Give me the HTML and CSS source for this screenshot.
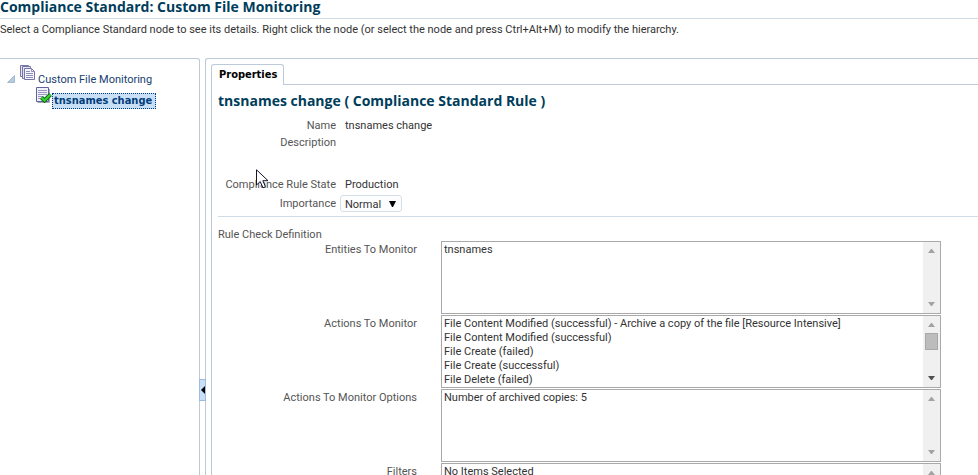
FILE: index.html
```html
<!DOCTYPE html>
<html lang="en">
    <head>
        <title>Compliance Standard</title>
        <meta charset="utf-8" />
        <meta name="viewport" content="width=device-width, initial-scale=1.0" />
        <link rel="stylesheet" href="styles.css">
    </head>
    <body>
        <h1 class="page-title">Compliance Standard: Custom File Monitoring</h1>
        <p class="hint">Select a Compliance Standard node to see its details. Right click the node (or select the node and press Ctrl+Alt+M) to modify the hierarchy.</p>
        <div class="split">
            <div class="tree">
                <div class="node">
                    <svg class="twisty" width="8" height="8" viewBox="0 0 8 8"><path d="M7.5 0.5V7.5H0.5z" fill="#b4cbe0" stroke="#a3bbd1" /></svg>
                    <svg class="icon" width="16" height="16" viewBox="0 0 16 16">
                        <path d="M.5.5H8.500V11.500H.5z" fill="#e4e3f2" stroke="#7674a8" />
                        <path d="M2.500 1.500H10.500V13.500H2.500z" fill="#e4e3f2" stroke="#7674a8" />
                        <path d="M4.500 3.500H11.500L14.500 6.500V14.500H4.500z" fill="#f5f5fc" stroke="#7674a8" />
                        <path d="M11.500 3.500V6.500H14.500M6 6.500H10M6 8.500H13M6 10.500H13M6 12.500H13" fill="none" stroke="#8f8dba" />
                    </svg>
                    <a class="node-link" href="#">Custom File Monitoring</a>
                </div>
                <div class="node child">
                    <svg class="icon" width="16" height="16" viewBox="0 0 16 16">
                        <path d="M1.500 15.500H13.500V2" fill="none" stroke="#a9a9b8" />
                        <path d="M.5.5H12.500V14.500H.5z" fill="#f1f1fa" stroke="#62609a" />
                        <path d="M2 3.500H11M2 5.500H11M2 7.500H11M2 9.500H7M2 11.500H5" stroke="#9997bd" />
                        <path d="M5.500 10.500L8.500 13.500L14.500 7.500" fill="none" stroke="#116a16" stroke-width="4" />
                        <path d="M5.500 10.500L8.500 13.500L14.500 7.500" fill="none" stroke="#35d42f" stroke-width="2" />
                    </svg>
                    <a class="node-link selected" href="#">tnsnames change</a>
                </div>
            </div>
            <button class="splitter" type="button" aria-label="Collapse pane">
                <svg width="4" height="8" viewBox="0 0 4 8"><path d="M4 0V8L0 4z" /></svg>
            </button>
            <div class="detail">
                <div class="tabs">
                    <a class="tab" href="#">Properties</a>
                </div>
                <div class="panel">
                    <h2 class="rule-title">tnsnames change ( Compliance Standard Rule )</h2>
                    <dl class="props">
                        <dt>Name</dt>
                        <dd>tnsnames change</dd>
                        <dt>Description</dt>
                        <dd class="description"></dd>
                        <dt>Compliance Rule State</dt>
                        <dd>Production</dd>
                        <dt class="tall"><label for="importance">Importance</label></dt>
                        <dd class="picker">
                            <select id="importance">
                                <option>Normal</option>
                            </select>
                            <svg class="caret" width="7" height="6" viewBox="0 0 7 6"><path d="M0 0H7L4 6H3z" /></svg>
                        </dd>
                    </dl>
                    <svg class="pointer" width="13" height="20" viewBox="0 0 13 20"><path d="M.5.8V16L4.200 12.600L7 18.800L9.500 17.700L6.800 11.700H12z" fill="#fff" stroke="#15152a" /></svg>
                    <h3 class="section">Rule Check Definition</h3>
                    <div class="checks">
                        <label for="entities">Entities To Monitor</label>
                        <div class="listbox">
                            <select id="entities" size="5">
                                <option>tnsnames</option>
                            </select>
                            <div class="scroll">
                                <svg width="7" height="4" viewBox="0 0 7 4"><path d="M0 4L3 0H4L7 4z" /></svg>
                                <svg width="7" height="4" viewBox="0 0 7 4"><path d="M0 0L3 4H4L7 0z" /></svg>
                            </div>
                        </div>
                        <label for="actions">Actions To Monitor</label>
                        <div class="listbox">
                            <select id="actions" size="5">
                                <option>File Content Modified (successful) - Archive a copy of the file [Resource Intensive]</option>
                                <option>File Content Modified (successful)</option>
                                <option>File Create (failed)</option>
                                <option>File Create (successful)</option>
                                <option>File Delete (failed)</option>
                            </select>
                            <div class="scroll">
                                <svg width="7" height="4" viewBox="0 0 7 4"><path d="M0 4L3 0H4L7 4z" /></svg>
                                <div class="thumb"></div>
                                <svg class="more" width="7" height="4" viewBox="0 0 7 4"><path d="M0 0L3 4H4L7 0z" /></svg>
                            </div>
                        </div>
                        <label for="options">Actions To Monitor Options</label>
                        <div class="listbox">
                            <select id="options" size="5">
                                <option>Number of archived copies: 5</option>
                            </select>
                            <div class="scroll">
                                <svg width="7" height="4" viewBox="0 0 7 4"><path d="M0 4L3 0H4L7 4z" /></svg>
                                <svg width="7" height="4" viewBox="0 0 7 4"><path d="M0 0L3 4H4L7 0z" /></svg>
                            </div>
                        </div>
                        <label for="filters">Filters</label>
                        <div class="listbox">
                            <select id="filters" size="5">
                                <option>No Items Selected</option>
                            </select>
                            <div class="scroll">
                                <svg width="7" height="4" viewBox="0 0 7 4"><path d="M0 4L3 0H4L7 4z" /></svg>
                                <svg width="7" height="4" viewBox="0 0 7 4"><path d="M0 0L3 4H4L7 0z" /></svg>
                            </div>
                        </div>
                    </div>
                </div>
            </div>
        </div>
    </body>
</html>
```
FILE: styles.css
```css
* {
    box-sizing: border-box;
}
body {
    display: flex;
    flex-direction: column;
    margin: 0;
    height: 100vh;
    overflow: hidden;
    background: white;
    color: #333;
    font: 11px/14px Roboto, Tahoma, sans-serif;
}
h1, h2, h3, p, dl, dd {
    margin: 0;
}
select {
    font: inherit;
    color: inherit;
}
.page-title, .rule-title {
    color: #003d5b;
    font: bold 14px/18px "Open Sans", Tahoma, sans-serif;
}
.page-title {
    height: 19px;
    line-height: 14px;
    border-bottom: 1px solid #cfdce6;
}
.hint {
    padding: 4px 0 21px;
}
.split {
    display: flex;
    flex: 1;
    min-height: 0;
}
.tree {
    width: 200px;
    padding: 6px 0 0 7px;
    border: 1px solid #bccad9;
    border-width: 1px 1px 0 0;
    border-top-right-radius: 3px;
}
.node {
    display: flex;
    align-items: flex-start;
    height: 22px;
}
.twisty {
    margin: 10px 5px 0 0;
}
.node-link {
    margin: 8px 0 0 2px;
    color: #17406f;
    text-decoration: none;
}
.child {
    padding-left: 29px;
}
.selected {
    margin: 6px 0 0 0;
    padding: 0 3px 0 1px;
    border: 1px dotted #003d7c;
    background: #c9dff5;
    color: #003d7c;
    font: bold 11px/14px "DejaVu Sans Condensed", "DejaVu Sans", sans-serif;
}
.splitter {
    display: flex;
    align-items: center;
    align-self: flex-start;
    justify-content: center;
    z-index: 1;
    margin: 321px -1px 0;
    border: 1px solid #9dbbe0;
    padding: 0;
    width: 7px;
    height: 22px;
    background: #c9dff5;
}
.splitter svg {
    flex: none;
}
.detail {
    display: flex;
    flex-direction: column;
    flex: 1;
    min-width: 0;
    padding: 5px 0 0 5px;
    border: 1px solid #bccad9;
    border-width: 1px 0 0 1px;
    border-top-left-radius: 3px;
}
.tabs {
    display: flex;
    border-bottom: 1px solid #bccad9;
}
.tab {
    margin-bottom: -1px;
    padding: 2px 6px 2px 7px;
    border: 1px solid #bccad9;
    border-bottom: 0;
    border-radius: 3px 3px 0 0;
    background: white;
    color: black;
    font: bold 11px/16px "DejaVu Sans Condensed", "DejaVu Sans", sans-serif;
    text-decoration: none;
}
.panel {
    position: relative;
    flex: 1;
    min-height: 0;
    overflow: hidden;
    padding: 7px 0 0 6px;
    border-left: 1px solid #bccad9;
}
.props {
    display: grid;
    grid-template-columns: 118px 1fr;
    column-gap: 9px;
    margin-top: 7px;
    padding-bottom: 4px;
    border-bottom: 1px solid #cfdce6;
    line-height: 17px;
}
.props dt {
    color: #555;
    text-align: right;
}
.description {
    height: 42px;
}
.props .tall, .picker {
    padding-top: 2px;
}
.picker {
    display: flex;
    align-items: center;
    margin-left: -5px;
}
.picker select {
    appearance: none;
    padding: 0 0 0 4px;
    width: 62px;
    height: 17px;
    border: 1px solid #d6dfe6;
    border-radius: 3px;
    background: #fbfdff;
}
.caret {
    margin-left: -13px;
    pointer-events: none;
}
.pointer {
    position: absolute;
    top: 84px;
    left: 44px;
}
.section {
    padding-top: 11px;
    height: 24px;
    color: #555;
    font-size: 11px;
    font-weight: normal;
}
.checks {
    display: grid;
    grid-template-columns: 199px 500px;
    gap: 1px 24px;
}
.checks label {
    padding-top: 2px;
    color: #555;
    text-align: right;
}
.listbox {
    display: flex;
    height: 73px;
    border: 1px solid #a9a9a9;
}
.listbox select {
    flex: 1;
    min-width: 0;
    border: 0;
    padding: 0;
    overflow: hidden;
    background: white;
    outline: 0;
}
.listbox option {
    padding: 1px 2px 0;
    height: 14px;
    min-height: 0;
}
.scroll {
    display: flex;
    flex-direction: column;
    align-items: center;
    justify-content: space-between;
    width: 17px;
    padding: 7px 0;
    background: #f0f0f0;
    fill: #a3a3a3;
}
.thumb {
    width: 13px;
    height: 17px;
    margin: 6px 0 auto;
    border: 1px solid #a8a8a8;
    background: #bcbcbc;
}
.more {
    fill: #505050;
}
```
